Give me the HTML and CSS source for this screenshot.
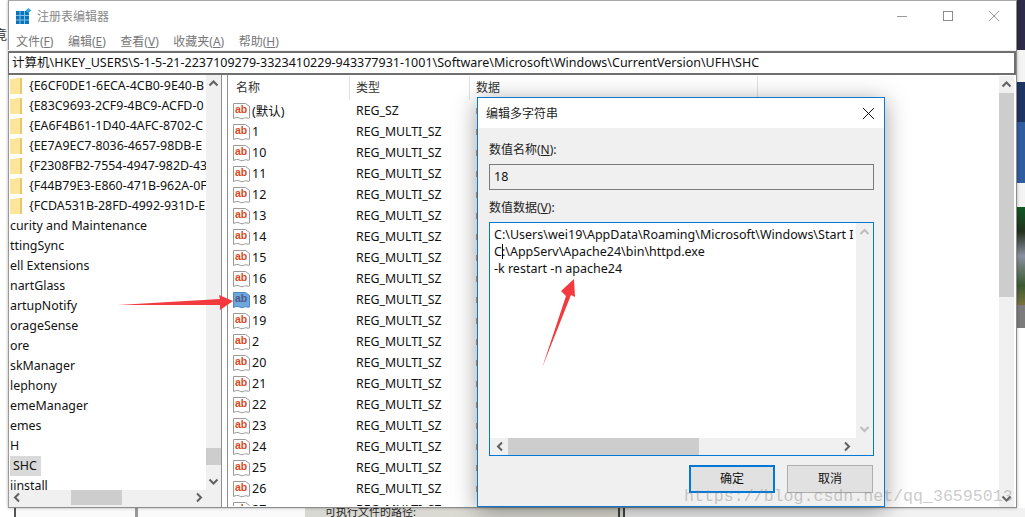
FILE: index.html
```html
<!DOCTYPE html>
<html lang="zh">
<head>
<meta charset="utf-8">
<title>注册表编辑器</title>
<link rel="stylesheet" href="styles.css">
</head>
<body>
<div class="desktop">
  <div class="bg-top"></div>
  <div class="bg-left-glyph">竟</div>
  <div class="bg-right">
    <div class="br a"></div><div class="br b"></div><div class="br c"></div>
    <div class="br c2b"></div><div class="br d"></div><div class="br e"></div>
    <div class="br g"></div><div class="br h"></div>
  </div>
  <div class="bg-bottom"><span class="bg-bottom-text">可执行文件的路径:</span></div>

  <div class="win">
    <div class="titlebar">
      <svg class="appicon" width="16" height="16" viewBox="0 0 16 16">
        <rect x="0" y="3" width="13" height="13" fill="#0d73b8"/>
        <path d="M4 3v13M8.500 3v13M0 7.500h13M0 12h13" stroke="#7fc4ec" stroke-width="1"/>
        <path d="M12.500 0l3 2.500-3 2.500-3-2.500z" fill="#3fa9e6"/>
      </svg>
      <span class="title">注册表编辑器</span>
      <div class="winbtns">
        <svg class="wb" width="12" height="12" viewBox="0 0 12 12"><path d="M1 6.500h10" stroke="#9a9a9a"/></svg>
        <svg class="wb" width="12" height="12" viewBox="0 0 12 12"><rect x="1.500" y="1.500" width="9" height="9" fill="none" stroke="#8c8c8c"/></svg>
        <svg class="wb" width="12" height="12" viewBox="0 0 12 12"><path d="M1 1l10 10M11 1L1 11" stroke="#9a9a9a"/></svg>
      </div>
    </div>
    <div class="menubar">
      <span>文件(<u>F</u>)</span><span>编辑(<u>E</u>)</span><span>查看(<u>V</u>)</span><span>收藏夹(<u>A</u>)</span><span>帮助(<u>H</u>)</span>
    </div>
    <div class="address">计算机\HKEY_USERS\S-1-5-21-2237109279-3323410229-943377931-1001\Software\Microsoft\Windows\CurrentVersion\UFH\SHC</div>
    <div class="panes">
      <div class="tree">
        <div class="tree-main">
          <div class="tree-rows">
            <div class="trow"><i class="folder"></i><span>{E6CF0DE1-6ECA-4CB0-9E40-B</span></div>
            <div class="trow"><i class="folder"></i><span>{E83C9693-2CF9-4BC9-ACFD-0</span></div>
            <div class="trow"><i class="folder"></i><span>{EA6F4B61-1D40-4AFC-8702-C</span></div>
            <div class="trow"><i class="folder"></i><span>{EE7A9EC7-8036-4657-98DB-E</span></div>
            <div class="trow"><i class="folder"></i><span>{F2308FB2-7554-4947-982D-43</span></div>
            <div class="trow"><i class="folder"></i><span>{F44B79E3-E860-471B-962A-0F</span></div>
            <div class="trow"><i class="folder"></i><span>{FCDA531B-28FD-4992-931D-E</span></div>
            <div class="trow plain"><span>curity and Maintenance</span></div>
            <div class="trow plain"><span>ttingSync</span></div>
            <div class="trow plain"><span>ell Extensions</span></div>
            <div class="trow plain"><span>nartGlass</span></div>
            <div class="trow plain"><span>artupNotify</span></div>
            <div class="trow plain"><span>orageSense</span></div>
            <div class="trow plain"><span>ore</span></div>
            <div class="trow plain"><span>skManager</span></div>
            <div class="trow plain"><span>lephony</span></div>
            <div class="trow plain"><span>emeManager</span></div>
            <div class="trow plain"><span>emes</span></div>
            <div class="trow plain"><span>H</span></div>
            <div class="trow plain sel"><span>SHC</span></div>
            <div class="trow plain"><span>iinstall</span></div>
          </div>
          <div class="tree-vs">
            <svg class="arr" width="15" height="17" viewBox="0 0 15 17"><path d="M3.500 10.500l4-4 4 4" fill="none" stroke="#606060" stroke-width="2"/></svg>
            <div class="tree-vs-track"><div class="tree-vs-thumb"></div></div>
            <svg class="arr" width="15" height="17" viewBox="0 0 15 17"><path d="M3.500 6.500l4 4 4-4" fill="none" stroke="#606060" stroke-width="2"/></svg>
          </div>
        </div>
        <div class="tree-hs">
          <svg class="arr" width="15" height="15" viewBox="0 0 15 15"><path d="M10 3.500l-4 4 4 4" fill="none" stroke="#606060" stroke-width="2"/></svg>
          <div class="tree-hs-thumb"></div>
          <svg class="arr arr-end" width="15" height="15" viewBox="0 0 15 15"><path d="M5 3.500l4 4-4 4" fill="none" stroke="#606060" stroke-width="2"/></svg>
        </div>
      </div>
      <div class="list">
        <div class="list-main">
          <div class="lhead">
            <span class="c1">名称</span><span class="c2">类型</span><span class="c3">数据</span><span class="c4"></span>
          </div>
          <div class="lrows" id="rows"></div>
        </div>
        <div class="list-vs">
          <svg class="arr" width="15" height="17" viewBox="0 0 15 17"><path d="M3.500 10.500l4-4 4 4" fill="none" stroke="#606060" stroke-width="2"/></svg>
          <div class="list-vs-thumb"></div>
          <svg class="arr arr-down" width="15" height="17" viewBox="0 0 15 17"><path d="M3.500 6.500l4 4 4-4" fill="none" stroke="#606060" stroke-width="2"/></svg>
        </div>
      </div>
    </div>
  </div>

  <div class="dialog">
    <div class="dlg-title">
      <span>编辑多字符串</span>
      <svg width="13" height="13" viewBox="0 0 13 13"><path d="M1 1l11 11M12 1L1 12" stroke="#111" stroke-width="1"/></svg>
    </div>
    <div class="dlg-body">
      <div class="lbl">数值名称(<u>N</u>):</div>
      <div class="namebox">18</div>
      <div class="lbl lbl2">数值数据(<u>V</u>):</div>
      <div class="databox">
        <div class="data-top">
          <div class="data-text">
            <div class="dline">C:\Users\wei19\AppData\Roaming\Microsoft\Windows\Start I</div>
            <div class="dline">C<span class="caret"></span>:\AppServ\Apache24\bin\httpd.exe</div>
            <div class="dline">-k restart -n apache24</div>
          </div>
          <div class="data-vs">
            <svg width="17" height="17" viewBox="0 0 17 17"><path d="M4.500 11l4-4 4 4" fill="none" stroke="#bdbdbd" stroke-width="2"/></svg>
            <svg width="17" height="17" viewBox="0 0 17 17"><path d="M4.500 6l4 4 4-4" fill="none" stroke="#bdbdbd" stroke-width="2"/></svg>
          </div>
        </div>
        <div class="data-hs">
          <svg class="arr" width="17" height="17" viewBox="0 0 17 17"><path d="M11 4.500l-4 4 4 4" fill="none" stroke="#606060" stroke-width="2"/></svg>
          <div class="data-hs-thumb"></div>
          <svg class="arr arr-end2" width="17" height="17" viewBox="0 0 17 17"><path d="M6 4.500l4 4-4 4" fill="none" stroke="#606060" stroke-width="2"/></svg>
        </div>
      </div>
      <div class="dlg-btns">
        <div class="btn primary">确定</div>
        <div class="btn">取消</div>
      </div>
    </div>
  </div>

  <svg class="arrows" width="1025" height="517" viewBox="0 0 1025 517">
    <path d="M118 305L220 299L219 295L233 301L220 310L220 305z" fill="#f33a3f"/>
    <path d="M542 368L566 296L561 291L574 279L575 297L571 295z" fill="#f33a3f"/>
  </svg>
  <div class="watermark">https://blog.csdn.net/qq_36595013</div>
</div>
<script src="rows.js"></script>
</body>
</html>
```
FILE: rows.js
```js
var names = ["(默认)","1","10","11","12","13","14","15","16","18","19","2","20","21","22","23","24","25","26","27"];
var box = document.getElementById("rows");
names.forEach(function (n, i) {
  var r = document.createElement("div");
  r.className = "lrow" + (n === "18" ? " hl" : "");
  r.innerHTML =
    '<svg class="ab" width="18" height="18" viewBox="0 0 18 18">' +
    '<path class="ab-bg" d="M.5 1.500h12l4 3v11.500c-2 1-3-1-5 0s-3 1-5 0-4-.5-6 .5z"/>' +
    '<text x="2" y="11" class="ab-t">ab</text></svg>' +
    '<span class="ln">' + n + '</span>' +
    '<span class="lt">' + (i === 0 ? "REG_SZ" : "REG_MULTI_SZ") + '</span>' +
    '<i class="lmark"></i>';
  box.appendChild(r);
});
```
FILE: styles.css
```css
* { box-sizing: border-box; }
html, body { margin: 0; padding: 0; }
body { font-family: "Noto Sans", "Noto Sans CJK SC", sans-serif; font-size: 12px; color: #111; }
.desktop { position: relative; width: 1025px; height: 517px; overflow: hidden; background: #fff; }
u { text-decoration: underline; }

.bg-top { position: absolute; left: 740px; top: 0; width: 285px; height: 2px; background: linear-gradient(90deg, #b0b0a8, #6a9a50 12%, #b7a94a 25%, #a0a0a0 50%, #2c2c48 60%, #2c2c48); }
.bg-left-glyph { position: absolute; left: -6px; top: 24px; font-size: 13px; color: #333; }
.bg-right { position: absolute; left: 1017px; top: 0; width: 8px; height: 517px; display: flex; flex-direction: column; background: #fff; }
.br.a { height: 50px; background: #2c2c48; }
.br.b { height: 32px; background: #f4f4f4; }
.br.c { height: 40px; background: #1d3560; }
.br.c2b { height: 61px; background: #2f5d9f; }
.br.d { height: 24px; background: #f4f4f4; }
.br.e { height: 98px; background: linear-gradient(180deg, #0e5a22, #24301e 25%, #8a90a0 50%, #3a5a30 80%, #7a7040); }
.br.g { height: 23px; background: #7c7c7c; }
.br.h { flex: 1; background: #fff; }
.bg-bottom { position: absolute; left: 0; top: 508px; width: 1025px; height: 9px; background: linear-gradient(90deg, #fff 14px, #555 14px, #555 16px, #fafafa 16px, #fafafa 135px, #999 135px, #999 138px, #fafafa 138px, #fafafa 305px, #d8d8d2 305px, #dedcd4 618px, #444 618px, #444 620px, #dedcd4 620px, #dedcd4 623px, #444 623px, #444 625px, #f2f2f2 625px, #f2f2f2 100%); }
.bg-bottom-text { position: absolute; left: 325px; top: -3px; font-size: 11px; line-height: 14px; color: #222; }

.win { position: absolute; left: 8px; top: 0; width: 1009px; height: 508px; background: #fff; border: 1px solid #8c8c8c; border-top-color: #a8a8a8; border-left-color: #9a9a9a; box-shadow: 0 0 3px rgba(0,0,0,.3); display: flex; flex-direction: column; }
.titlebar { height: 30px; display: flex; align-items: center; padding-left: 7px; }
.appicon { margin-right: 5px; }
.title { font-size: 12px; color: #888; }
.winbtns { margin-left: auto; display: flex; align-items: center; gap: 34px; padding-right: 16px; }
.menubar { height: 20px; display: flex; gap: 14.500px; padding-left: 7px; align-items: center; font-size: 12px; color: #777; }
.menubar u { text-decoration-thickness: 1px; }
.address { height: 24px; border: 2px solid #6f6f6f; border-width: 2px 2px 2px 1px; margin-left: -1px; background: #fff; line-height: 20px; padding-left: 3px; font-size: 12.500px; white-space: nowrap; overflow: hidden; box-shadow: 0 -1px 0 #f0f0f0; }

.panes { flex: 1; display: flex; min-height: 0; }
.tree { width: 213px; border-right: 1px solid #8f8f8f; display: flex; flex-direction: column; background: #f0f0f0; }
.tree-main { flex: 1; display: flex; min-height: 0; }
.tree-rows { width: 197px; background: #fff; overflow: hidden; padding-top: 1px; font-size: 12.400px; }
.trow { height: 20px; display: flex; align-items: center; white-space: nowrap; overflow: hidden; }
.trow span { line-height: 20px; }
.trow.plain { padding-left: 1px; }
.trow.sel span { background: #d9d9d9; padding: 0 4px 0 3px; }
.folder { display: inline-block; width: 12px; height: 16px; background: #fde59c; border-right: 2px solid #e8c66a; margin: 0 7px 0 1px; flex: none; clip-path: polygon(0 1px, 5px 1px, 6px 0, 100% 0, 100% 100%, 0 100%); }
.tree-vs { width: 15px; margin-left: 0; display: flex; flex-direction: column; }
.tree-vs-track { flex: 1; display: flex; flex-direction: column; justify-content: flex-end; padding-bottom: 8px; }
.tree-vs-thumb { height: 17px; background: #cdcdcd; }
.tree-hs { height: 15px; display: flex; align-items: center; margin-bottom: 2px; }
.tree-hs-thumb { width: 51px; height: 15px; background: #cdcdcd; margin-left: 47px; }
.arr { display: block; flex: none; }
.arr-end { margin-left: 70px; }

.list { flex: 1; display: flex; min-width: 0; margin-left: 5px; border-left: 1px solid #8f8f8f; padding-bottom: 1px; }
.list-main { flex: 1; min-width: 0; overflow: hidden; }
.lhead { height: 25px; display: flex; font-size: 12px; color: #333; padding-top: 1px; }
.lhead span { display: block; flex: none; border-right: 1px solid #e2e2e2; line-height: 23px; padding-left: 6px; height: 24px; }
.lhead .c1 { width: 122px; padding-left: 8px; }
.lhead .c2 { width: 120px; }
.lhead .c3 { width: 288px; }
.lhead .c4 { border-right: 0; }
.lrow { height: 21px; display: flex; align-items: center; white-space: nowrap; padding-left: 5px; }
.ab { flex: none; margin-right: 1px; }
.ab-bg { fill: #fff; stroke: #9a9a9a; stroke-width: 1; }
.ab-t { font-family: "Liberation Sans", sans-serif; font-weight: 700; font-size: 10.500px; fill: #d84a24; }
.hl .ab-bg { fill: #6ea6de; stroke: #4f86c6; }
.hl .ab-t { fill: #4f5a86; }
.ln { flex: none; width: 104px; font-size: 12.500px; }
.lt { flex: none; width: 120px; font-size: 12.300px; }
.lmark { display: block; flex: none; width: 1px; height: 6px; background: #d9a050; }
.list-vs { width: 15px; background: #f0f0f0; margin-right: 2px; margin-top: 1px; display: flex; flex-direction: column; height: 431px; }
.list-vs-thumb { height: 204px; background: #cdcdcd; }
.arr-down { margin-top: auto; }

.dialog { position: absolute; left: 477px; top: 97px; width: 408px; height: 410px; background: #f0f0f0; border: 1px solid #0c78d4; box-shadow: 0 4px 22px rgba(0,0,0,.38); display: flex; flex-direction: column; }
.dlg-title { height: 30px; background: #fff; display: flex; align-items: center; justify-content: space-between; padding: 0 9px 0 8px; font-size: 12px; color: #222; flex: none; }
.dlg-body { flex: 1; padding: 13px 10px 0 11px; display: flex; flex-direction: column; }
.lbl { height: 17px; line-height: 17px; font-size: 12px; color: #222; }
.namebox { height: 26px; margin-top: 6px; border: 1px solid #7a7a7a; background: #f0f0f0; line-height: 24px; padding-left: 4px; font-size: 12.500px; }
.lbl2 { margin-top: 9px; }
.databox { height: 234px; margin-top: 6px; border: 1px solid #0078d7; background: #fff; display: flex; flex-direction: column; }
.data-top { flex: 1; display: flex; min-height: 0; }
.data-text { flex: 1; min-width: 0; overflow: hidden; padding: 3px 0 0 4px; white-space: nowrap; font-size: 12.500px; }
.dline { height: 17px; line-height: 17px; }
.caret { display: inline-block; width: 1px; height: 15px; background: #000; vertical-align: -3px; margin-right: -1px; }
.data-vs { width: 17px; flex: none; background: #f0f0f0; display: flex; flex-direction: column; justify-content: space-between; }
.data-hs { height: 17px; flex: none; background: #f0f0f0; display: flex; padding-left: 1px; }
.data-hs-thumb { width: 191px; background: #cdcdcd; }
.arr-end2 { margin-left: auto; margin-right: 17px; }
.dlg-btns { display: flex; justify-content: flex-end; gap: 12px; margin-top: 9px; margin-right: 1px; }
.btn { width: 86px; height: 28px; border: 1px solid #adadad; background: #e1e1e1; text-align: center; line-height: 26px; font-size: 12px; color: #111; }
.btn.primary { border: 2px solid #0078d7; line-height: 24px; }

.arrows { position: absolute; left: 0; top: 0; pointer-events: none; }
.watermark { position: absolute; left: 684px; top: 487px; font-family: "Liberation Mono", monospace; font-size: 16.600px; line-height: 20px; color: rgba(130,130,130,.42); white-space: nowrap; }
```
